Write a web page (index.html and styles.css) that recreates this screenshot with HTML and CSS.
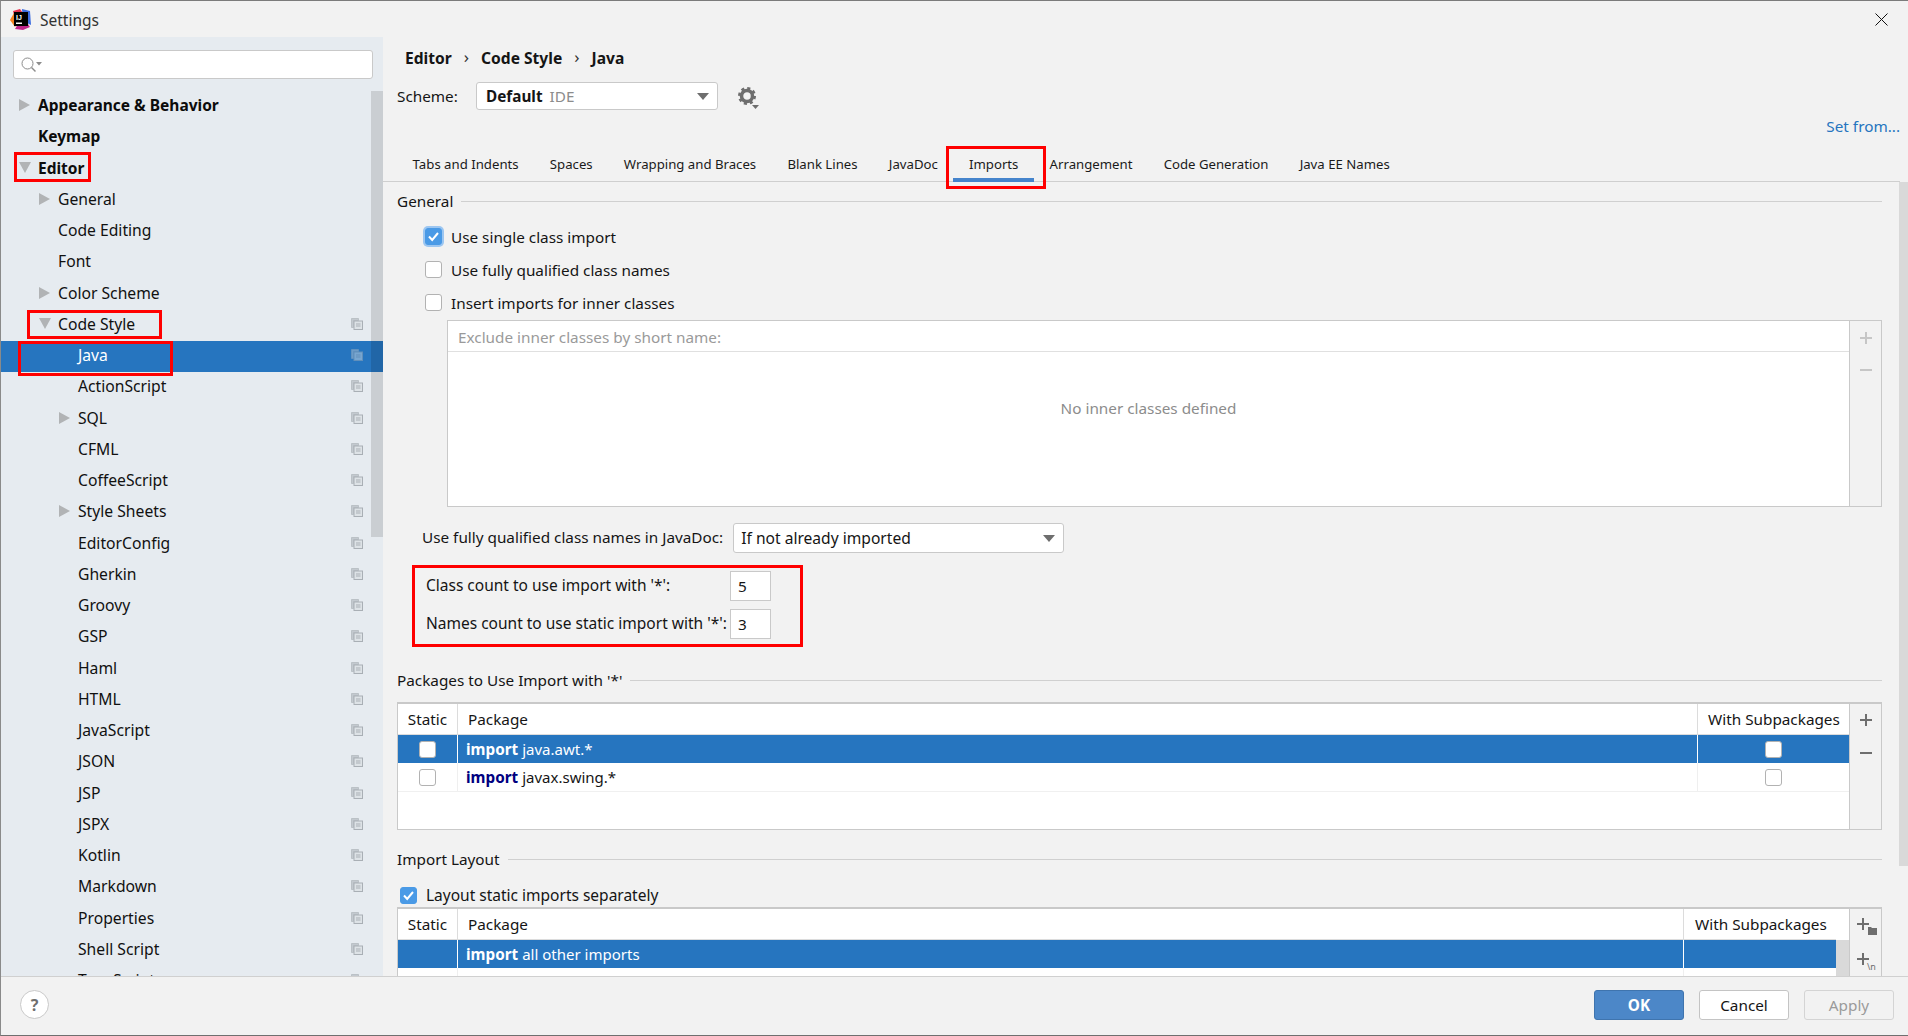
FILE: index.html
```html
<!DOCTYPE html>
<html lang="en">
<head>
<meta charset="utf-8">
<title>Settings</title>
<link rel="stylesheet" href="styles.css">
</head>
<body>
<svg class="defs" aria-hidden="true">
  <symbol id="copy" viewBox="0 0 12 12">
    <path d="M.5.5h7v2h-5v7h-2z" fill="#c3c9cf" stroke="#b4babf" stroke-width=".8"/>
    <rect x="3" y="3" width="8.5" height="8.5" fill="#dde2e6" stroke="#a9afb5"/>
    <path d="M5 6h4.500M5 8h4.500" stroke="#a9afb5"/>
  </symbol>
  <symbol id="right" viewBox="0 0 12 12"><path d="M0 0l11 6-11 6z" fill="#b1b3b5"/></symbol>
  <symbol id="down" viewBox="0 0 12 12"><path d="M0 0h12l-6 11z" fill="#b1b3b5"/></symbol>
  <symbol id="tick" viewBox="0 0 17 17"><path d="M4 8.500l3.200 3.500 5.800-7" fill="none" stroke="#fff" stroke-width="2"/></symbol>
</svg>
<div class="window">
  <header class="titlebar">
    <svg class="logo" viewBox="0 0 22 22">
      <path d="M3 3l7-2 3 4-8 6z" fill="#e8314f"/>
      <path d="M0 12l4-7 4 9-3 5z" fill="#f58220"/>
      <path d="M12 1l8 2 1 14-8-4z" fill="#3d6de0"/>
      <path d="M5 21l3-5 10 0 2 3-7 3z" fill="#c0268c"/>
      <rect x="4" y="4" width="14" height="14" fill="#000"/>
      <text x="6" y="11.500" class="logo-text">IJ</text>
      <rect x="6" y="14.500" width="6" height="1.500" fill="#fff"/>
    </svg>
    <span class="title">Settings</span>
    <svg class="close" viewBox="0 0 13 13"><path d="M.5.500l12 12M12.500.500l-12 12" stroke="#111" fill="none"/></svg>
  </header>
  <div class="body">
    <aside class="sidebar">
      <div class="search">
        <svg class="search-icon" viewBox="0 0 21 16"><circle cx="6.500" cy="6.500" r="5.500" fill="none" stroke="#8c8c8c"/><path d="M10.500 10.500l4 4" stroke="#8c8c8c" stroke-width="1.500"/><path d="M15 5h6l-3 3.500z" fill="#8c8c8c"/></svg>
      </div>
      <div class="tree">
        <div class="row l0"><svg class="arrow"><use href="#right"/></svg><b>Appearance &amp; Behavior</b></div>
        <div class="row l0"><b>Keymap</b></div>
        <div class="row l0"><svg class="arrow"><use href="#down"/></svg><b>Editor</b></div>
        <div class="row l1"><svg class="arrow"><use href="#right"/></svg>General</div>
        <div class="row l1">Code Editing</div>
        <div class="row l1">Font</div>
        <div class="row l1"><svg class="arrow"><use href="#right"/></svg>Color Scheme</div>
        <div class="row l1"><svg class="arrow"><use href="#down"/></svg>Code Style<svg class="copy"><use href="#copy"/></svg></div>
        <div class="row l2 selected">Java<svg class="copy"><use href="#copy"/></svg></div>
        <div class="row l2">ActionScript<svg class="copy"><use href="#copy"/></svg></div>
        <div class="row l2"><svg class="arrow"><use href="#right"/></svg>SQL<svg class="copy"><use href="#copy"/></svg></div>
        <div class="row l2">CFML<svg class="copy"><use href="#copy"/></svg></div>
        <div class="row l2">CoffeeScript<svg class="copy"><use href="#copy"/></svg></div>
        <div class="row l2"><svg class="arrow"><use href="#right"/></svg>Style Sheets<svg class="copy"><use href="#copy"/></svg></div>
        <div class="row l2">EditorConfig<svg class="copy"><use href="#copy"/></svg></div>
        <div class="row l2">Gherkin<svg class="copy"><use href="#copy"/></svg></div>
        <div class="row l2">Groovy<svg class="copy"><use href="#copy"/></svg></div>
        <div class="row l2">GSP<svg class="copy"><use href="#copy"/></svg></div>
        <div class="row l2">Haml<svg class="copy"><use href="#copy"/></svg></div>
        <div class="row l2">HTML<svg class="copy"><use href="#copy"/></svg></div>
        <div class="row l2">JavaScript<svg class="copy"><use href="#copy"/></svg></div>
        <div class="row l2">JSON<svg class="copy"><use href="#copy"/></svg></div>
        <div class="row l2">JSP<svg class="copy"><use href="#copy"/></svg></div>
        <div class="row l2">JSPX<svg class="copy"><use href="#copy"/></svg></div>
        <div class="row l2">Kotlin<svg class="copy"><use href="#copy"/></svg></div>
        <div class="row l2">Markdown<svg class="copy"><use href="#copy"/></svg></div>
        <div class="row l2">Properties<svg class="copy"><use href="#copy"/></svg></div>
        <div class="row l2">Shell Script<svg class="copy"><use href="#copy"/></svg></div>
        <div class="row l2">TypeScript<svg class="copy"><use href="#copy"/></svg></div>
      </div>
      <div class="tree-scroll"></div>
    </aside>
    <main class="main">
      <nav class="crumbs"><b>Editor</b><span class="chev">›</span><b>Code Style</b><span class="chev">›</span><b>Java</b></nav>
      <div class="scheme">
        <span class="scheme-label">Scheme:</span>
        <div class="combo scheme-combo"><span><b>Default</b> <span class="muted">IDE</span></span><i class="caret"></i></div>
        <svg class="gear" viewBox="0 0 22 22">
          <circle cx="9" cy="9" r="5.500" fill="none" stroke="#6e6e6e" stroke-width="3.500"/>
          <circle cx="9" cy="9" r="7.500" fill="none" stroke="#6e6e6e" stroke-width="3" stroke-dasharray="3 2.890"/>
          <path d="M14 18h7l-3.500 4z" fill="#6e6e6e"/>
        </svg>
      </div>
      <div class="setfrom"><span class="link">Set from...</span></div>
      <div class="tabs">
        <span class="tab">Tabs and Indents</span>
        <span class="tab">Spaces</span>
        <span class="tab">Wrapping and Braces</span>
        <span class="tab">Blank Lines</span>
        <span class="tab">JavaDoc</span>
        <span class="tab active">Imports</span>
        <span class="tab">Arrangement</span>
        <span class="tab">Code Generation</span>
        <span class="tab">Java EE Names</span>
      </div>
      <div class="content">
        <div class="group g-general"><span>General</span><hr></div>
        <div class="checks">
          <label class="check"><span class="box on focus"><svg><use href="#tick"/></svg></span>Use single class import</label>
          <label class="check"><span class="box"></span>Use fully qualified class names</label>
          <label class="check"><span class="box"></span>Insert imports for inner classes</label>
        </div>
        <section class="panel">
          <div class="panel-list">
            <div class="panel-head">Exclude inner classes by short name:</div>
            <div class="panel-empty">No inner classes defined</div>
          </div>
          <div class="tools">
            <svg class="tool"><path d="M8 2v12M2 8h12" stroke="#c6c6c6" stroke-width="2"/></svg>
            <svg class="tool"><path d="M2 8h12" stroke="#c6c6c6" stroke-width="2"/></svg>
          </div>
        </section>
        <div class="javadoc">
          <span>Use fully qualified class names in JavaDoc:</span>
          <div class="combo javadoc-combo"><span>If not already imported</span><i class="caret"></i></div>
        </div>
        <div class="counts">
          <div class="count"><span class="count-label">Class count to use import with '*':</span><span class="input">5</span></div>
          <div class="count"><span class="count-label">Names count to use static import with '*':</span><span class="input">3</span></div>
        </div>
        <div class="group g-packages"><span>Packages to Use Import with '*'</span><hr></div>
        <section class="table t-packages">
          <div class="grid">
            <div class="tr head"><div class="c-static">Static</div><div class="c-pkg">Package</div><div class="c-sub">With Subpackages</div></div>
            <div class="tr sel"><div class="c-static"><span class="box"></span></div><div class="c-pkg"><b>import</b> java.awt.*</div><div class="c-sub center"><span class="box"></span></div></div>
            <div class="tr"><div class="c-static"><span class="box"></span></div><div class="c-pkg"><b class="kw">import</b> javax.swing.*</div><div class="c-sub center"><span class="box"></span></div></div>
          </div>
          <div class="tools dark">
            <svg class="tool"><path d="M8 2v12M2 8h12" stroke="#6e6e6e" stroke-width="2"/></svg>
            <svg class="tool"><path d="M2 8h12" stroke="#6e6e6e" stroke-width="2"/></svg>
          </div>
        </section>
        <div class="group g-layout"><span>Import Layout</span><hr></div>
        <label class="check layout-check"><span class="box on"><svg><use href="#tick"/></svg></span>Layout static imports separately</label>
        <section class="table t-layout">
          <div class="grid">
            <div class="tr head"><div class="c-static">Static</div><div class="c-pkg">Package</div><div class="c-sub">With Subpackages</div></div>
            <div class="tr sel"><div class="c-static"></div><div class="c-pkg"><b>import</b> all other imports</div><div class="c-sub"></div></div>
            <div class="tr"><div class="c-static"></div><div class="c-pkg"></div><div class="c-sub"></div></div>
          </div>
          <div class="vbar"></div>
          <div class="tools dark">
            <svg class="tool wide" viewBox="0 0 22 18"><path d="M7 1v12M1 7h12" stroke="#6e6e6e" stroke-width="2"/><path d="M12 10h3l1 1h5v7h-9z" fill="#6e6e6e"/></svg>
            <svg class="tool wide" viewBox="0 0 22 18"><path d="M7 1v12M1 7h12" stroke="#6e6e6e" stroke-width="2"/><text x="11" y="17.500" class="nl">\n</text></svg>
          </div>
        </section>
      </div>
      <div class="main-scroll"></div>
    </main>
  </div>
  <footer class="footer">
    <span class="help">?</span>
    <div class="buttons">
      <span class="btn primary">OK</span>
      <span class="btn">Cancel</span>
      <span class="btn disabled">Apply</span>
    </div>
  </footer>
  <div class="mark m-editor"></div>
  <div class="mark m-style"></div>
  <div class="mark m-java"></div>
  <div class="mark m-imports"></div>
  <div class="mark m-counts"></div>
</div>
</body>
</html>
```
FILE: styles.css
```css
* { box-sizing: border-box; }
html, body { margin: 0; height: 100%; }
body { font-family: "Noto Sans", "Open Sans", sans-serif; font-size: 15.300px; color: #151515; background: #f2f2f2; overflow: hidden; }
.defs { position: absolute; width: 0; height: 0; }
.window { position: relative; width: 1908px; height: 1036px; display: flex; flex-direction: column; border-top: 1px solid #7b7b7b; border-left: 1px solid #8a8a8a; border-bottom: 1px solid #6f6f6f; background: #f2f2f2; overflow: hidden; }

.titlebar { height: 36px; flex: none; display: flex; align-items: center; padding: 0 20px 0 9px; }
.logo { width: 22px; height: 22px; }
.logo-text { font: bold 7px "Liberation Sans", sans-serif; fill: #fff; }
.title { margin-left: 8px; padding-top: 2px; font-size: 15.500px; color: #333; }
.close { width: 13px; height: 13px; margin-left: auto; }

.body { flex: 1; min-height: 0; display: flex; }
.sidebar { position: relative; width: 382px; flex: none; background: #e6ebf0; overflow: hidden; }
.search { height: 29px; margin: 13px 10px 12px 12px; background: #fff; border: 1px solid #c9c9c9; border-radius: 3px; display: flex; align-items: center; padding-left: 7px; }
.search-icon { width: 21px; height: 16px; }
.tree { display: flex; flex-direction: column; }
.row { position: relative; flex: none; height: 31.250px; display: flex; align-items: center; font-size: 15.700px; color: #111; padding-bottom: 3px; }
.row b { font-weight: 700; font-size: 15.500px; color: #0c0c0c; }
.l0 { padding-left: 37px; }
.l1 { padding-left: 57px; }
.l2 { padding-left: 77px; }
.arrow { position: absolute; top: 8px; width: 12px; height: 12px; }
.l0 .arrow { left: 18px; }
.l1 .arrow { left: 38px; }
.l2 .arrow { left: 58px; }
.copy { position: absolute; left: 350px; top: 8px; width: 12px; height: 12px; }
.selected { background: #2675bf; color: #fff; }
.selected .copy { opacity: .45; }
.tree-scroll { position: absolute; left: 370px; top: 54px; width: 12px; height: 446px; background: rgba(0, 0, 0, .12); }

.main { position: relative; flex: 1; min-width: 0; display: flex; flex-direction: column; overflow: hidden; }
.crumbs { flex: none; height: 24px; margin: 9px 0 0 22px; display: flex; align-items: center; gap: 12px; font-size: 15.600px; }
.crumbs b { font-weight: 700; }
.chev { color: #333; font-size: 17px; line-height: 1; margin-top: -4px; }
.scheme { flex: none; height: 28px; margin: 12px 0 0 14px; display: flex; align-items: center; }
.scheme-label { width: 79px; }
.combo { display: flex; align-items: center; justify-content: space-between; background: #fff; border: 1px solid #c9c9c9; border-radius: 3px; padding: 0 7px; }
.combo b { font-weight: 700; }
.muted { color: #8c8c8c; margin-left: 3px; }
.scheme-combo { width: 242px; height: 28px; padding-left: 9px; }
.caret { width: 0; height: 0; border-left: 6px solid transparent; border-right: 6px solid transparent; border-top: 7px solid #6e6e6e; margin-right: 1px; }
.gear { width: 22px; height: 22px; margin: 3px 0 0 20px; }
.setfrom { flex: none; height: 24px; margin-top: 4px; padding-bottom: 1px; display: flex; justify-content: flex-end; align-items: center; padding-right: 8px; }
.link { color: #2675bf; }
.tabs { flex: none; height: 44px; margin-right: 8px; padding-left: 14px; display: flex; border-bottom: 1px solid #cfcfcf; font-size: 13.200px; }
.tab { height: 44px; padding: 8px 15.600px 0; display: flex; align-items: center; color: #1a1a1a; }
.tab.active { border-bottom: 4px solid #4584cc; padding-top: 12px; }

.content { flex: 1; min-height: 0; margin-left: 14px; width: 1485px; display: flex; flex-direction: column; }
.group { flex: none; height: 22px; display: flex; align-items: center; gap: 8px; }
.group hr { flex: 1; border: 0; border-top: 1px solid #d0d0d0; margin: 0; }
.g-general { margin-top: 8px; }
.checks { flex: none; margin-top: 8px; padding-left: 28px; }
.check { height: 33px; display: flex; align-items: center; gap: 9px; }
.box { width: 17px; height: 17px; flex: none; display: inline-block; background: #fff; border: 1px solid #b2b2b2; border-radius: 3px; }
.box svg { display: block; width: 17px; height: 17px; margin: -1px; }
.box.on { background: #4a9ae6; border-color: #4a9ae6; }
.box.focus { box-shadow: 0 0 0 2px #9cc6f1; }
.panel { flex: none; height: 187px; margin: 1px 0 0 50px; display: flex; border: 1px solid #c9c9c9; }
.panel-list { flex: 1; background: #fff; display: flex; flex-direction: column; }
.panel-head { height: 31px; flex: none; padding: 2px 0 0 10px; display: flex; align-items: center; color: #9a9a9a; border-bottom: 1px solid #e0e0e0; }
.panel-empty { flex: 1; display: flex; align-items: center; justify-content: center; color: #8c8c8c; padding-bottom: 43px; }
.tools { width: 32px; flex: none; display: flex; flex-direction: column; align-items: center; padding-top: 9px; gap: 16px; border-left: 1px solid #c9c9c9; background: #f2f2f2; }
.tool { width: 16px; height: 16px; }
.tool.wide { width: 22px; height: 18px; margin-left: 3px; }
.nl { font: 9px "Noto Sans", sans-serif; fill: #6e6e6e; }
.javadoc { flex: none; height: 30px; margin-top: 16px; padding-left: 25px; display: flex; align-items: center; gap: 10px; }
.javadoc > span:first-child { padding-bottom: 2px; }
.javadoc-combo { width: 331px; height: 30px; font-size: 15.600px; }
.counts { flex: none; margin-top: 18px; padding-left: 29px; display: flex; flex-direction: column; gap: 8px; }
.count { display: flex; align-items: center; height: 30px; }
.count-label { width: 304px; flex: none; white-space: nowrap; font-size: 15.500px; padding-bottom: 2px; }
.input { width: 41px; height: 30px; background: #fff; border: 1px solid #c9c9c9; padding-left: 7px; display: flex; align-items: center; }
.g-packages { margin-top: 30px; }
.table { flex: none; display: flex; border: 1px solid #c9c9c9; border-top-width: 2px; background: #fff; }
.t-packages { height: 128px; margin-top: 11px; }
.grid { flex: 1; min-width: 0; display: flex; flex-direction: column; background: #fff; }
.tr { display: flex; height: 29px; flex: none; border-bottom: 1px solid #f0f0f0; }
.tr > div { display: flex; align-items: center; border-left: 1px solid #efefef; }
.tr > .c-static { width: 59px; justify-content: center; border-left: 0; }
.c-pkg { flex: 1; padding-left: 8px; font-size: 15px; }
.c-sub { width: 152px; padding-left: 10px; }
.c-sub.center { justify-content: center; padding-left: 0; }
.head { height: 31px; border-bottom: 1px solid #dcdcdc; }
.head .c-pkg { padding-left: 10px; font-size: 15.300px; }
.head > div { border-left-color: #dcdcdc; }
.tr b { font-weight: 700; font-size: 15.300px; margin-right: 4px; }
.kw { color: #000080; }
.sel { height: 28px; background: #2675bf; color: #fff; border-bottom: 0; }
.sel > div { border-left-color: #fff; }
.dark { padding-top: 8px; gap: 17px; }
.g-layout { margin-top: 18px; }
.layout-check { height: 24px; margin-top: 13px; padding-left: 3px; gap: 9px; flex: none; font-size: 15.500px; }
.t-layout { height: 100px; margin-top: 0; }
.t-layout .c-sub { width: 153px; padding-left: 11px; }
.vbar { width: 13px; flex: none; background: #d9d9d9; margin-top: 31px; }
.main-scroll { position: absolute; right: 0; top: 145px; width: 9px; height: 684px; background: #d9d9d9; }

.footer { flex: none; height: 59px; border-top: 1px solid #d0d0d0; background: #f2f2f2; display: flex; align-items: center; padding: 0 14px 3px 19px; position: relative; }
.help { width: 29px; height: 29px; border-radius: 50%; background: #fff; border: 1px solid #c9c9c9; color: #6e6e6e; font-weight: 700; font-size: 16px; display: flex; align-items: center; justify-content: center; }
.buttons { margin-left: auto; display: flex; gap: 15px; }
.btn { width: 90px; height: 30px; display: flex; align-items: center; justify-content: center; background: #fff; border: 1px solid #c4c4c4; border-radius: 3px; }
.btn.primary { background: #4c87c8; border-color: #3f74ae; color: #fff; font-weight: 700; }
.btn.disabled { background: #f2f2f2; border-color: #d4d4d4; color: #9a9a9a; }

.mark { position: absolute; border: 3.500px solid #f00; pointer-events: none; }
.m-editor { left: 13px; top: 151px; width: 77px; height: 30px; }
.m-style { left: 26px; top: 309px; width: 135px; height: 29px; }
.m-java { left: 17px; top: 340px; width: 155px; height: 35px; }
.m-imports { left: 945px; top: 145px; width: 100px; height: 43px; }
.m-counts { left: 411px; top: 564px; width: 391px; height: 82px; }
```
